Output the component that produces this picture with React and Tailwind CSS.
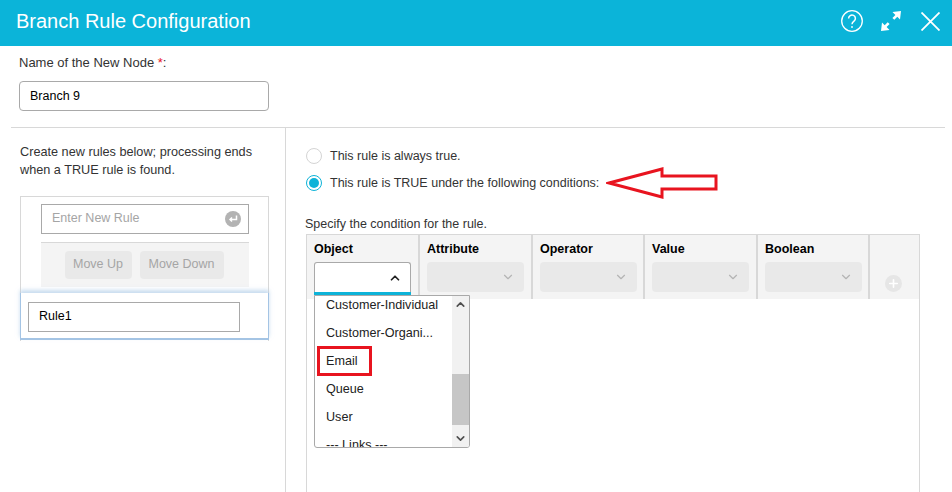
import React from "react";
import { ChevronDown, ChevronUp, Plus } from "lucide-react";

const columns = [
  { name: "Object", width: "w-[113px]" },
  { name: "Attribute", width: "w-[113px]" },
  { name: "Operator", width: "w-[112px]" },
  { name: "Value", width: "w-[113px]" },
  { name: "Boolean", width: "w-[112px]" },
];
const options = ["Customer-Individual", "Customer-Organi...", "Email", "Queue", "User", "--- Links ---"];

const DisabledSelect = () => (
  <div className="flex h-[30px] w-[97px] items-center justify-end rounded-sm bg-[#e9e9e9] pr-[9px]">
    <ChevronDown size={14} strokeWidth={2} className="text-[#b4b4b4]" />
  </div>
);

const Dropdown = () => (
  <div className="absolute left-[7px] top-[60px] z-10 flex h-[153px] w-[156px] overflow-hidden rounded-b-[3px] border border-[#a9a9a9] bg-white">
    <div className="relative flex-1 overflow-hidden">
      <div className="-mt-[5px]">
        {options.map((o) => (
          <div key={o} className="flex h-[28px] items-center whitespace-nowrap pl-[11px] text-[12.6px] text-[#222]">
            {o}
          </div>
        ))}
      </div>
      <div className="absolute left-[2px] top-[50px] h-[30px] w-[55px] border-[3px] border-[#e8141f]" />
    </div>
    <div className="flex w-[17px] flex-col bg-[#f1f1f1]">
      <div className="flex h-[17px] items-center justify-center">
        <ChevronUp size={13} strokeWidth={3} className="text-[#505050]" />
      </div>
      <div className="mt-[61px] h-[51px] bg-[#c6c6c6]" />
      <div className="mt-auto flex h-[17px] items-center justify-center">
        <ChevronDown size={13} strokeWidth={3} className="text-[#505050]" />
      </div>
    </div>
  </div>
);

const ConditionTable = () => (
  <div className="relative ml-[1px] mt-[2px] w-[614px] flex-1 border-x border-t border-[#d8d8d8]">
    <div className="flex h-[64px] bg-[#f4f4f4]">
      {columns.map((c, i) => (
        <div key={c.name} className={`${c.width} border-r-2 border-[#d8d8d8] pl-[7px] pt-[6px]`}>
          <div className="text-[12.5px] font-bold leading-[16px] text-black">{c.name}</div>
          <div className="mt-[5px]">
            {i === 0 ? (
              <div>
                <div className="flex h-[30px] w-[97px] items-center justify-end rounded-t-[3px] border border-b-0 border-[#a9a9a9] bg-white pr-[8px]">
                  <ChevronUp size={14} strokeWidth={3} className="text-[#222]" />
                </div>
                <div className="h-[3px] w-[97px] bg-[#0db3d8]" />
              </div>
            ) : (
              <DisabledSelect />
            )}
          </div>
        </div>
      ))}
      <div className="flex flex-1 items-end justify-center pb-[7px] pr-[3px]">
        <div className="flex h-[17px] w-[17px] items-center justify-center rounded-full bg-[#e6e6e6]">
          <Plus size={13} strokeWidth={3} className="text-white" />
        </div>
      </div>
    </div>
    <Dropdown />
  </div>
);

const Radio = ({ checked, label }) => (
  <div className="flex h-[16px] items-center">
    <div
      className={
        checked
          ? "flex h-[16px] w-[16px] items-center justify-center rounded-full border border-[#0db3d8] bg-white"
          : "h-[16px] w-[16px] rounded-full border border-[#d4d4d4] bg-white"
      }
    >
      {checked && <div className="h-[10px] w-[10px] rounded-full bg-[#0db3d8]" />}
    </div>
    <span className="ml-[8px] text-[12.5px] text-[#333]">{label}</span>
  </div>
);

export default function App() {
  return (
    <div className="relative h-[492px] w-[952px] overflow-hidden bg-white font-['Liberation_Sans',Arial,sans-serif]">
      {/* Header */}
      <header className="flex h-[46px] items-center justify-between bg-[#0bb4d9] pb-[4px] pl-[16px] pr-[12px] text-white">
        <h1 className="text-[20px] font-normal">Branch Rule Configuration</h1>
        <div className="flex items-center">
          <svg width="24" height="24" viewBox="0 0 24 24" fill="none" stroke="white" strokeWidth="1.3">
            <circle cx="12" cy="12" r="10.3" />
            <path d="M8.6 9.5a3.4 3.4 0 1 1 5.4 2.7c-1.2.9-2 1.5-2 3.1" strokeWidth="1.5" />
            <circle cx="12" cy="18" r="0.9" fill="white" stroke="none" />
          </svg>
          <svg className="ml-[16px]" width="22" height="22" viewBox="0 0 22 22" fill="white">
            <path d="M21 1l-1 8.500-2.700-2.700-3 3-1.900-1.900 3-3L12.500 2.100z" />
            <path d="M1 21l1-8.500 2.700 2.700 3-3 1.900 1.900-3 3 2.900 2.800z" />
          </svg>
          <svg className="ml-[19px]" width="19" height="19" viewBox="0 0 19 19" fill="none" stroke="white" strokeWidth="1.8">
            <path d="M0.500 0.500l18 18M18.500 0.500l-18 18" />
          </svg>
        </div>
      </header>

      {/* Node name */}
      <div className="h-[81px] pl-[19px] pt-[9px]">
        <label className="block text-[13px] leading-[15px] text-[#333]">
          Name of the New Node <span className="text-[#e8141f]">*</span>:
        </label>
        <div className="mt-[11px] flex h-[30px] w-[250px] items-center rounded-sm border border-[#a9a9a9] pl-[10px] text-[12.5px] text-black">
          Branch 9
        </div>
      </div>

      {/* Body */}
      <div className="ml-[11px] mr-[7px] flex h-[365px] border-t border-[#d8d8d8]">
        {/* Rules list */}
        <div className="w-[275px] border-r border-[#d8d8d8] pl-[9px] pt-[15px]">
          <p className="w-[245px] text-[12.7px] leading-[18px] text-[#333]">
            Create new rules below; processing ends when a TRUE rule is found.
          </p>
          <div className="mt-[17px] h-[145px] w-[249px] border border-b-0 border-[#d8d8d8]">
            <div className="mx-[20px] pt-[7px]">
              <div className="flex h-[30px] w-[208px] items-center justify-between border border-[#a9a9a9] pb-[1px] pl-[10px] pr-[7px] text-[12.5px] text-[#a5a5a5]">
                Enter New Rule
                <div className="flex h-[16px] w-[16px] items-center justify-center rounded-full bg-[#b3b3b3]">
                  <svg width="10" height="10" viewBox="0 0 10 10" fill="none" stroke="white" strokeWidth="1.5">
                    <path d="M8.500 1.500v4H2M4 3.500L2 5.500l2 2" />
                  </svg>
                </div>
              </div>
              <div className="mt-[8px] flex h-[45px] w-[208px] justify-center gap-[8px] border-t border-[#d8d8d8] bg-[#f4f4f4] pr-[2px] pt-[8px]">
                <div className="flex h-[28px] w-[67px] items-center justify-center rounded-sm bg-[#e9e9e9] pb-[1px] text-[12.5px] text-[#a5a5a5]">
                  Move Up
                </div>
                <div className="flex h-[28px] w-[84px] items-center justify-center rounded-sm bg-[#e9e9e9] pb-[1px] text-[12.5px] text-[#a5a5a5]">
                  Move Down
                </div>
              </div>
            </div>
            <div className="-ml-[1px] mt-[6px] h-[47px] w-[249px] border border-t-0 border-b-2 border-[#a4c4e4] bg-white pl-[7px] pt-[9px] shadow-[0_-3px_4px_rgba(164,196,228,0.6)]">
              <div className="flex h-[30px] w-[212px] items-center border border-[#a9a9a9] pb-[1px] pl-[10px] text-[12.5px] text-black">
                Rule1
              </div>
            </div>
          </div>
        </div>

        {/* Rule conditions */}
        <div className="flex flex-1 flex-col pl-[19px] pt-[20px]">
          <div className="flex flex-col gap-[11px] pl-[1px]">
            <Radio label="This rule is always true." />
            <Radio checked label="This rule is TRUE under the following conditions:" />
          </div>
          <p className="mt-[25px] text-[12.5px] leading-[16px] text-[#333]">Specify the condition for the rule.</p>
          <ConditionTable />
        </div>
      </div>

      {/* Annotation arrow */}
      <svg className="absolute left-[606px] top-[166px]" width="114" height="36" viewBox="0 0 114 36" fill="none" stroke="#e8141f" strokeWidth="3">
        <path d="M3 17L56 3v7h54v13H56v8z" />
      </svg>
    </div>
  );
}
